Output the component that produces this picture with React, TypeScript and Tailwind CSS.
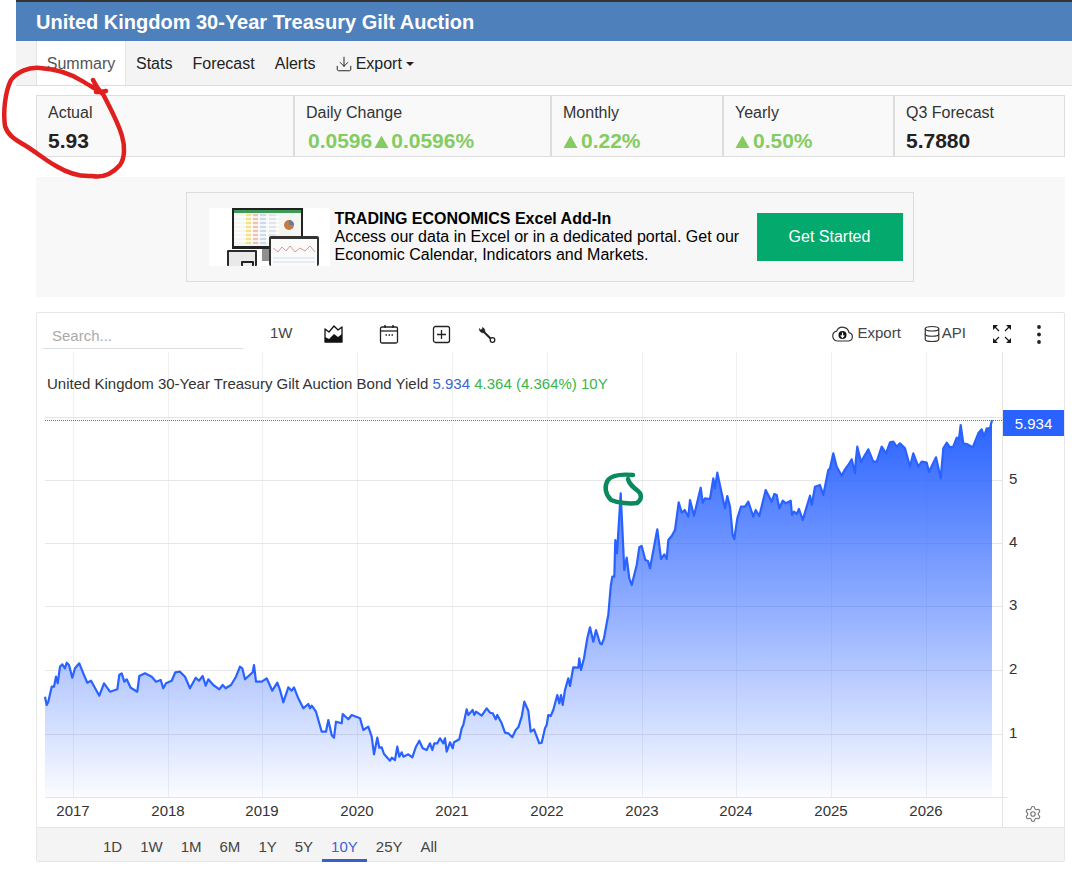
import { Database, Download, Settings } from "lucide-react";

type P = [number, number];
const seg = (x0: number, y0: number, pts: number[][]): P[] => pts.map(([x, y]) => [x0 + x / 3, y0 + y / 3] as P);
const raw: P[] = [
  ...seg(30, 640, [[45,170],[50,195],[55,185],[65,140],[72,140],[78,110],[83,130],[90,80],[97,73],[105,85],[110,68],[117,75],[127,113],[135,85],[148,70],[160,100],[172,128],[183,122],[208,167],[222,130],[240,155],[262,148],[268,105],[275,100],[283,125],[290,118],[302,143],[322,155],[328,108],[345,100],[365,110],[378,125],[392,120],[400,145],[408,130],[425,122],[436,97],[450,95],[465,110],[480,145],[497,113],[507,122],[518,108],[527,137],[535,118],[550,135],[568,148],[578,135],[587,145],[603,135],[618,110],[630,80],[637,85],[645,118],[668,97],[672,75],[678,125],[695,125],[710,115],[727,152],[742,128],[750,150],[760,187],[775,142],[785,152],[792,142],[805,175],[820,205],[835,192],[840,205],[845,197],[858,215],[875,275],[888,275],[895,240],[905,285],[912,293],[918,245],[935,250],[938,222],[955,238],[965,225],[990,235],[1000,270],[1015,260],[1025,290],[1032,343],[1042,293],[1048,323],[1055,322],[1062,342],[1080,362]]),
  ...seg(380, 620, [[30,423],[35,413],[45,420],[52,380],[58,410],[65,397],[70,410],[85,403],[97,412],[108,380],[118,362],[128,385],[140,390],[150,370],[157,390],[163,370],[172,370],[180,355],[190,370],[195,355],[200,395],[210,367],[218,385],[222,367],[238,358],[245,325],[250,315],[260,268],[265,285],[278,270],[283,285],[288,275],[305,287],[320,265],[330,278],[338,280],[347,298],[352,285],[365,310],[375,338],[385,340],[397,352],[407,330],[415,322],[425,290],[433,245],[445,272],[452,335],[462,328],[478,370],[485,368],[495,325],[500,315],[505,285],[512,288],[520,270],[532,225],[538,250],[543,225],[548,255],[555,210],[565,175],[570,198],[580,142],[595,143],[598,115],[603,150],[612,115],[622,55],[630,22],[640,65],[648,30],[660,70],[665,73],[672,55],[682,0]]),
  ...seg(580, 460, [[85,465],[92,380],[97,350],[103,350],[106,240],[111,280],[122,100],[133,330],[140,293],[148,355],[155,375],[170,315],[178,262],[185,258],[196,300],[204,303],[210,325],[232,208],[243,297],[253,283],[260,297],[265,240],[275,228],[285,210],[296,127],[305,158],[314,150],[325,170],[330,120],[342,167],[362,83],[368,128],[375,115],[390,117],[400,55],[405,85],[412,38],[425,100],[435,145],[442,108],[450,140],[458,225],[463,237],[472,175],[483,140],[495,140],[505,125],[520,170],[527,150],[538,168],[557,90],[575,125],[583,102],[590,105],[598,145],[608,122],[618,130],[632,122],[636,165],[642,155],[650,162],[657,147],[668,180],[690,107]]),
  ...seg(810, 410, [[5,285],[15,230],[30,225],[40,255],[55,180],[60,175],[70,130],[80,170],[95,197],[105,178],[115,165],[125,148],[135,190],[137,155],[142,110],[153,155],[175,118],[190,155],[200,155],[215,110],[228,130],[240,97],[250,95],[260,110],[270,100],[285,115],[300,170],[310,130],[325,170],[335,155],[350,158],[357,185],[378,142],[392,205],[400,115],[410,98],[420,112],[430,110],[440,83],[447,85],[452,45],[460,100],[470,102],[488,112],[505,70],[515,58],[522,80],[530,55],[540,55],[546,30]]),
];
const pts = raw.reduce<P[]>((a, p) => {
  if (!a.length || p[0] > a[a.length - 1][0]) a.push(p);
  return a;
}, []);
const line = "M" + pts.map(([x, y]) => `${x.toFixed(1)} ${y.toFixed(1)}`).join("L");
const area = `${line}L992 797L45 797Z`;

const years: [string, number][] = [["2017",73],["2018",168],["2019",262],["2020",357],["2021",452],["2022",547],["2023",642],["2024",736],["2025",831],["2026",926]];
const levels: [string, number][] = [["5",480],["4",543],["3",606],["2",670],["1",734]];

const Up = () => (
  <svg width="15" height="13" viewBox="0 0 15 13" className="shrink-0"><path d="M7.5 0.5L14.5 13H0.5Z" fill="#84cc62" /></svg>
);

function Stat({ label, children, first }: { label: string; children: React.ReactNode; first?: boolean }) {
  return (
    <div className={first ? "pl-[11px] pt-[6px]" : "border-l-2 border-[#dddddd] pl-[11px] pt-[6px]"}>
      <div className="text-[16px] leading-[22px] text-[#333333]">{label}</div>
      <div className="mt-[4px] flex items-center text-[21px] font-bold leading-[26px]">{children}</div>
    </div>
  );
}

function Devices() {
  return (
    <svg width="121" height="58" viewBox="0 0 121 58" className="shrink-0 bg-white">
      <rect x="23" y="0" width="71" height="41" fill="#222" />
      <rect x="25" y="2" width="67" height="36" fill="#f4f6f2" />
      <rect x="25" y="2" width="67" height="3" fill="#3f9a58" />
      <rect x="37" y="6" width="5" height="30" fill="#f4e18a" />
      <rect x="44" y="6" width="5" height="30" fill="#f2c1b0" />
      <rect x="51" y="6" width="6" height="30" fill="#cfd9ea" />
      <rect x="60" y="6" width="7" height="30" fill="#dfe5ee" />
      <path d="M26 9H70M26 13H70M26 17H70M26 21H70M26 25H70M26 29H70M26 33H70" stroke="#ffffff" strokeWidth="1.4" />
      <circle cx="80" cy="17" r="5" fill="#c77b44" />
      <path d="M80 17V12A5 5 0 0 1 85 17Z" fill="#5f7fa8" />
      <rect x="53" y="41" width="14" height="12" fill="#8f8f8f" />
      <rect x="60" y="28" width="50" height="30" rx="2" fill="#333" />
      <rect x="62" y="31" width="46" height="27" fill="#fbfbfb" />
      <path d="M64 40L69 44L73 39L77 43L81 38L86 44L91 40L96 43L101 38L106 44" fill="none" stroke="#d99a8f" strokeWidth="1" />
      <path d="M64 50H106M64 54H106" stroke="#cfdcec" strokeWidth="1" />
      <rect x="18" y="42" width="30" height="16" rx="1" fill="#2b2b2b" />
      <rect x="20" y="44" width="26" height="14" fill="#e9e9e9" />
      <rect x="32" y="53" width="13" height="5" rx="1" fill="#222" />
      <rect x="34" y="55" width="9" height="3" fill="#eee" />
    </svg>
  );
}

function TIcon({ children, w = 20 }: { children: React.ReactNode; w?: number }) {
  return <svg width={w} height="20" viewBox={`0 0 ${w} 20`} className="shrink-0">{children}</svg>;
}

function RangeBtn({ t, active }: { t: string; active?: boolean }) {
  return (
    <div className={active ? "flex h-[34px] items-center border-b-[3px] border-[#3b5fc8] px-[9px] pt-[7px] text-[#3e63d6]" : "flex h-[34px] items-center px-[9px] pt-[4px] text-[#444444]"}>
      {t}
    </div>
  );
}

export default function App() {
  return (
    <div className="relative h-[874px] w-[1072px] overflow-hidden bg-white text-[#333333] [font-family:'Liberation_Sans',Arial,sans-serif]">
      <div className="pl-[16px]">
        <div className="flex h-[41px] items-center border-t-2 border-[#333333] bg-[#4e80bc] pl-[20px] text-[20px] font-bold text-white">
          United Kingdom 30-Year Treasury Gilt Auction
        </div>
        <div className="flex h-[45px] items-stretch border-b border-[#dddddd] bg-[#f4f4f4] pl-[20px] text-[16px] text-[#222222]">
          <div className="flex w-[90px] items-center justify-center border-x border-[#e4e4e4] bg-white pt-[1px] text-[#555555]">Summary</div>
          <div className="ml-[10px] flex items-center pt-[1px]">Stats</div>
          <div className="ml-[20px] flex items-center pt-[1px]">Forecast</div>
          <div className="ml-[20px] flex items-center pt-[1px]">Alerts</div>
          <div className="ml-[19px] flex items-center gap-[3px] pt-[1px]">
            <Download size={18} strokeWidth={1.3} />
            <span>Export</span>
            <span className="ml-[1px] h-0 w-0 border-x-[4px] border-t-[4px] border-x-transparent border-t-[#222222]" />
          </div>
        </div>
      </div>

      <div className="ml-[36px] w-[1029px]">
        <div className="mt-[9px] grid h-[62px] grid-cols-[256px_257px_172px_171px_171px] border border-[#dddddd] bg-[#f9f9f9]">
          <Stat label="Actual" first><span className="text-[#222222]">5.93</span></Stat>
          <Stat label="Daily Change">
            <span className="ml-[2px] flex items-center gap-[2px] text-[#84cc62]">0.0596<Up />0.0596%</span>
          </Stat>
          <Stat label="Monthly"><span className="flex items-center gap-[3px] text-[#84cc62]"><Up />0.22%</span></Stat>
          <Stat label="Yearly"><span className="flex items-center gap-[3px] text-[#84cc62]"><Up />0.50%</span></Stat>
          <Stat label="Q3 Forecast"><span className="text-[#222222]">5.7880</span></Stat>
        </div>

        <div className="mt-[20px] flex h-[120px] items-center justify-center bg-[#f8f8f8] pr-[2px]">
          <div className="flex h-[90px] w-[728px] items-center border border-[#dddddd] bg-[#f7f7f7] pl-[22px] pr-[10px] text-black">
            <Devices />
            <div className="ml-[5px] flex-1 text-[16px] leading-[18px]">
              <div className="font-bold">TRADING ECONOMICS Excel Add-In</div>
              <div className="w-[412px]">Access our data in Excel or in a dedicated portal. Get our Economic Calendar, Indicators and Markets.</div>
            </div>
            <div className="flex h-[48px] w-[146px] items-center justify-center bg-[#04a96d] text-[16px] text-white">Get Started</div>
          </div>
        </div>

        <div className="mt-[15px] h-[550px] rounded-[2px] border border-[#e6e6e6]">
          <div className="flex h-[39px] items-center pt-[2px] text-[15px] text-[#444444]">
            <div className="ml-[6px] mt-[4px] flex h-[30px] w-[200px] items-center self-start border-b border-[#dddddd] pl-[9px] pt-[6px] text-[#aaaaaa]">Search...</div>
            <div className="ml-[27px] text-[#444444]">1W</div>
            <div className="ml-[31px]">
              <TIcon>
                <path d="M1 5L5 8L10 2L14 6L18 3V18H1Z" fill="#fff" stroke="#111" strokeWidth="1.3" strokeLinejoin="round" />
                <path d="M1 18V13L5 15L10 10L14 13L18 10V18Z" fill="#111" />
              </TIcon>
            </div>
            <div className="ml-[35px]">
              <TIcon>
                <rect x="1.5" y="3" width="17" height="16" rx="1.5" fill="none" stroke="#222" strokeWidth="1.3" />
                <path d="M1.5 7H18.5" stroke="#222" strokeWidth="1.3" />
                <path d="M6 1V4M14 1V4" stroke="#222" strokeWidth="1.5" />
                <path d="M6.5 11H8M9.5 11H11M12.5 11H14" stroke="#222" strokeWidth="1.5" />
              </TIcon>
            </div>
            <div className="ml-[33px]">
              <TIcon>
                <rect x="1.5" y="2.5" width="16" height="16" rx="2" fill="none" stroke="#222" strokeWidth="1.3" />
                <path d="M9.5 6V15M5 10.5H14" stroke="#222" strokeWidth="1.3" />
              </TIcon>
            </div>
            <div className="ml-[25px]">
              <TIcon>
                <path d="M6 7L14.5 15.5" stroke="#222" strokeWidth="2" />
                <path d="M2.5 4.5A3.6 3.6 0 0 0 7.5 8.5A3.6 3.6 0 0 0 5.5 3.5L5 5.5L3.6 6Z" fill="#222" stroke="#222" strokeWidth="0.6" />
                <circle cx="15.5" cy="16" r="2.3" fill="#fff" stroke="#222" strokeWidth="1.3" />
              </TIcon>
            </div>
            <div className="ml-auto flex items-center">
              <svg width="23" height="18" viewBox="0 0 23 18" className="shrink-0">
                <path d="M6 16H17.5A4.2 4.2 0 0 0 18 7.7A6.5 6.5 0 0 0 5.6 6.2A5 5 0 0 0 6 16Z" fill="#fff" stroke="#333" strokeWidth="1.2" />
                <circle cx="11.5" cy="10" r="4" fill="#111" />
                <path d="M11.5 7.5V12M9.7 10.4L11.5 12.4L13.3 10.4" fill="none" stroke="#fff" strokeWidth="1.2" />
              </svg>
              <span className="ml-[3px] text-[#444444]">Export</span>
              <Database size={18} strokeWidth={1.6} className="ml-[22px] text-[#333333]" />
              <span className="ml-[1px] text-[#444444]">API</span>
              <svg width="20" height="20" viewBox="0 0 20 20" className="ml-[26px] shrink-0">
                <path d="M1 1H6L1 6ZM19 1V6L14 1ZM1 19V14L6 19ZM19 19H14L19 14Z" fill="#1a1a1a" />
                <path d="M3 3L7 7M17 3L13 7M3 17L7 13M17 17L13 13" stroke="#1a1a1a" strokeWidth="1.2" />
              </svg>
              <svg width="6" height="20" viewBox="0 0 6 20" className="ml-[24px] mr-[22px] shrink-0">
                <circle cx="3" cy="3" r="1.9" fill="#222" /><circle cx="3" cy="10.5" r="1.9" fill="#222" /><circle cx="3" cy="18" r="1.9" fill="#222" />
              </svg>
            </div>
          </div>

          <div className="relative h-[475px]">
            <svg width="1027" height="475" viewBox="37 352 1027 475" className="block">
              <defs>
                <linearGradient id="fill" gradientUnits="userSpaceOnUse" x1="0" y1="420" x2="0" y2="797">
                  <stop offset="0" stopColor="#2962ff" stopOpacity="1" />
                  <stop offset="1" stopColor="#2962ff" stopOpacity="0.02" />
                </linearGradient>
              </defs>
              {years.map(([t, x]) => <line key={t} x1={x + 0.5} x2={x + 0.5} y1="352" y2="797" stroke="#eef0f3" />)}
              <line x1="1002.5" x2="1002.5" y1="352" y2="827" stroke="#e4e4e4" />
              <line x1="45" x2="1003" y1="417.5" y2="417.5" stroke="#e4e4e4" />
              {levels.map(([t, y]) => <line key={t} x1="45" x2="1003" y1={y + 0.5} y2={y + 0.5} stroke="#e6e6e6" />)}
              <line x1="45" x2="1007" y1="797.5" y2="797.5" stroke="#e4e4e4" />
              <line x1="45" x2="1003" y1="420.5" y2="420.5" stroke="#4a76c0" strokeDasharray="1 1" />
              <path d={area} fill="url(#fill)" />
              <path d={line} fill="none" stroke="#2962ff" strokeWidth="2.2" strokeLinejoin="round" />
              {years.map(([t, x]) => (
                <text key={t} x={x} y="816" textAnchor="middle" fontSize="15" fill="#333">{t}</text>
              ))}
              {levels.map(([t, y]) => (
                <text key={t} x="1009" y={y + 3.5} fontSize="15" fill="#333">{t}</text>
              ))}
              <rect x="1003" y="410" width="61" height="26" fill="#2962ff" />
              <text x="1033.5" y="428.5" textAnchor="middle" fontSize="15" fill="#fff">5.934</text>
            </svg>
            <div className="absolute left-[10px] top-[23px] whitespace-nowrap text-[15px] leading-[18px] text-[#333333]">
              United Kingdom 30-Year Treasury Gilt Auction Bond Yield <span className="text-[#3e63d6]">5.934</span> <span className="text-[#39b54a]">4.364 (4.364%) 10Y</span>
            </div>
            <Settings size={18} strokeWidth={1.5} className="absolute left-[987px] top-[453px] text-[#777777]" />
          </div>

          <div className="flex h-[34px] items-stretch border-t border-[#e4e4e4] bg-[#f4f4f4] pl-[57px] text-[15px]">
            <RangeBtn t="1D" /><RangeBtn t="1W" /><RangeBtn t="1M" /><RangeBtn t="6M" /><RangeBtn t="1Y" /><RangeBtn t="5Y" /><RangeBtn t="10Y" active /><RangeBtn t="25Y" /><RangeBtn t="All" />
          </div>
        </div>
      </div>

      <svg width="1072" height="874" viewBox="0 0 1072 874" className="pointer-events-none absolute left-0 top-0">
        <path d="M93 80C96 85 98 90 103 94M96 92C99 92 102 92 106 91M103 94C109 106 118 122 122 136C125 146 125 158 120 165C113 173 103 178 92 176C78 177 66 172 56 166C45 160 36 152 26 146C16 140 8 136 5 126C3 112 5 92 11 80C17 72 28 67 40 68C56 69 72 74 84 82C90 86 98 90 103 94" fill="none" stroke="#e0201f" strokeWidth="4.5" strokeLinecap="round" strokeLinejoin="round" />
        <path d="M633 475C622 474 612 475 608 480C604 486 605 494 611 500C618 503 630 504 637 503C642 500 642 494 638 491C633 487 629 484 628 479" fill="none" stroke="#0a8a5c" strokeWidth="4.5" strokeLinecap="round" strokeLinejoin="round" />
      </svg>
    </div>
  );
}
